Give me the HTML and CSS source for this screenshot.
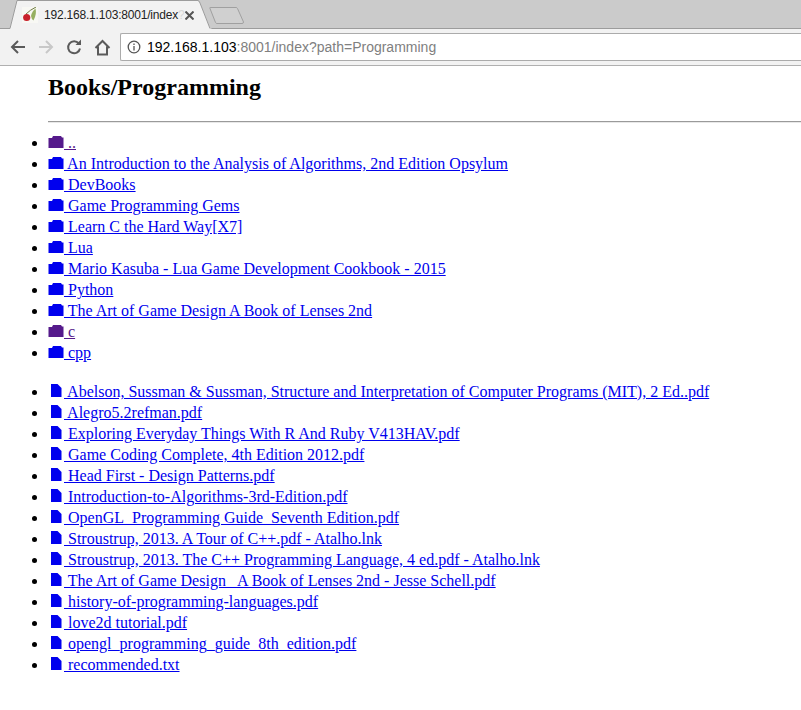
FILE: index.html
```html
<!DOCTYPE html>
<html>
<head>
<meta charset="utf-8">
<title>Books/Programming</title>
<link rel="stylesheet" href="styles.css">
</head>
<body>
<header class="chrome">
  <div class="tabstrip">
    <svg class="tab-shape" width="260" height="29" viewBox="0 0 260 29">
      <path class="tab-bg" d="M8 29 L10 28 L17 1 H198 Q199 1 200 3 L210 28 L212 29 Z"/>
      <path class="tab-line" d="M0 28.500 H10 L17 .5 H198 Q199 .5 200 3 L210 28.500"/>
      <path class="newtab" d="M210 8.500 Q209 7.500 211 7.500 H236 Q237 7.500 237.500 8.500 L243.500 22 Q243.500 23.500 242 23.500 H217 Q216 23.500 215.500 22.500 Z"/>
    </svg>
    <svg class="favicon" width="16" height="16" viewBox="0 0 16 16">
      <rect width="16" height="16" fill="#f8f8f4"/>
      <path d="M9 9 Q10 4 13.500 1.500 Q15 7 11.500 13.500 Q9.500 12.500 9 9Z" fill="#96b060"/>
      <path d="M4 7 Q8 3 14 0" fill="none" stroke="#6f7a40"/>
      <circle cx="4.700" cy="10.500" r="3.600" fill="#c8202a"/>
    </svg>
    <span class="tab-title">192.168.1.103:8001/index<span class="tab-fade">?</span></span>
    <svg class="tab-close" width="9" height="9" viewBox="0 0 9 9"><path d="M.5 .5 L8.500 8.500 M8.500 .5 L.5 8.500"/></svg>
  </div>
  <div class="toolbar">
    <svg class="nav" width="16" height="18" viewBox="0 0 16 18"><path class="nav-dark" d="M15 9 H2 M8 3 L2 9 L8 15"/></svg>
    <svg class="nav" width="16" height="18" viewBox="0 0 16 18"><path class="nav-faint" d="M1 9 H14 M8 3 L14 9 L8 15"/></svg>
    <svg class="nav" width="16" height="18" viewBox="0 0 16 18"><path class="nav-dark" d="M12.800 5.500 A6 6 0 1 0 14 10.500"/><path class="nav-fill" d="M9.500 7 H15 V1.500 Z"/></svg>
    <svg class="nav nav-wide" width="18" height="18" viewBox="0 0 18 18"><path class="nav-dark" d="M1.500 10 L8.500 3 L15.500 10 M4 8.500 V16.500 H13 V8.500"/></svg>
    <div class="omnibox">
      <svg class="info" width="14" height="14" viewBox="0 0 14 14"><circle cx="7" cy="7" r="5.800"/><path d="M7 6 V10.500 M7 3.500 V5"/></svg>
      <span class="host">192.168.1.103</span><span class="rest">:8001/index?path=Programming</span>
    </div>
  </div>
</header>
<main>
  <h1>Books/Programming</h1>
  <hr>
  <ul class="dirs">
    <li><a class="seen" href="#x"><svg class="ico"><use href="#f"/></svg> ..</a></li>
    <li><a href="#a"><svg class="ico"><use href="#f"/></svg> An Introduction to the Analysis of Algorithms, 2nd Edition Opsylum</a></li>
    <li><a href="#a"><svg class="ico"><use href="#f"/></svg> DevBooks</a></li>
    <li><a href="#a"><svg class="ico"><use href="#f"/></svg> Game Programming Gems</a></li>
    <li><a href="#a"><svg class="ico"><use href="#f"/></svg> Learn C the Hard Way[X7]</a></li>
    <li><a href="#a"><svg class="ico"><use href="#f"/></svg> Lua</a></li>
    <li><a href="#a"><svg class="ico"><use href="#f"/></svg> Mario Kasuba - Lua Game Development Cookbook - 2015</a></li>
    <li><a href="#a"><svg class="ico"><use href="#f"/></svg> Python</a></li>
    <li><a href="#a"><svg class="ico"><use href="#f"/></svg> The Art of Game Design A Book of Lenses 2nd</a></li>
    <li><a class="seen" href="#x"><svg class="ico"><use href="#f"/></svg> c</a></li>
    <li><a href="#a"><svg class="ico"><use href="#f"/></svg> cpp</a></li>
  </ul>
  <ul class="files">
    <li><a href="#a"><svg class="ico"><use href="#d"/></svg> Abelson, Sussman &amp; Sussman, Structure and Interpretation of Computer Programs (MIT), 2 Ed..pdf</a></li>
    <li><a href="#a"><svg class="ico"><use href="#d"/></svg> Alegro5.2refman.pdf</a></li>
    <li><a href="#a"><svg class="ico"><use href="#d"/></svg> Exploring Everyday Things With R And Ruby V413HAV.pdf</a></li>
    <li><a href="#a"><svg class="ico"><use href="#d"/></svg> Game Coding Complete, 4th Edition 2012.pdf</a></li>
    <li><a href="#a"><svg class="ico"><use href="#d"/></svg> Head First - Design Patterns.pdf</a></li>
    <li><a href="#a"><svg class="ico"><use href="#d"/></svg> Introduction-to-Algorithms-3rd-Edition.pdf</a></li>
    <li><a href="#a"><svg class="ico"><use href="#d"/></svg> OpenGL_Programming Guide_Seventh Edition.pdf</a></li>
    <li><a href="#a"><svg class="ico"><use href="#d"/></svg> Stroustrup, 2013. A Tour of C++.pdf - Atalho.lnk</a></li>
    <li><a href="#a"><svg class="ico"><use href="#d"/></svg> Stroustrup, 2013. The C++ Programming Language, 4 ed.pdf - Atalho.lnk</a></li>
    <li><a href="#a"><svg class="ico"><use href="#d"/></svg> The Art of Game Design_ A Book of Lenses 2nd - Jesse Schell.pdf</a></li>
    <li><a href="#a"><svg class="ico"><use href="#d"/></svg> history-of-programming-languages.pdf</a></li>
    <li><a href="#a"><svg class="ico"><use href="#d"/></svg> love2d tutorial.pdf</a></li>
    <li><a href="#a"><svg class="ico"><use href="#d"/></svg> opengl_programming_guide_8th_edition.pdf</a></li>
    <li><a href="#a"><svg class="ico"><use href="#d"/></svg> recommended.txt</a></li>
  </ul>
</main>
<svg class="defs" width="0" height="0">
  <symbol id="f" viewBox="0 0 16 13"><path d="M0.500 13 V3 H4 L5 1 H13 L14 2.500 H15.500 V13 Z"/></symbol>
  <symbol id="d" viewBox="0 0 16 13"><path d="M3 0 H9.500 L13.500 4 V13 H3 Z"/></symbol>
</svg>
</body>
</html>
```
FILE: styles.css
```css
html, body { margin: 0; padding: 0; background: #fff; }
body { font-family: "Liberation Serif", "Times New Roman", serif; font-size: 16px; color: #000; overflow: hidden; }

.chrome { height: 66px; font-family: "Liberation Sans", Arial, sans-serif; }
.tabstrip { position: relative; height: 29px; background: #cbcbcb; border-bottom: 1px solid #9c9c9c; display: flex; align-items: center; box-sizing: border-box; padding: 2px 0 0 22px; }
.tab-shape { position: absolute; left: 0; top: 0; }
.tab-bg { fill: #f2f2f2; }
.tab-line { fill: none; stroke: #9c9c9c; }
.newtab { fill: #d0d0d0; stroke: #a0a0a0; }
.favicon { position: relative; flex: none; }
.tab-title { position: relative; flex: none; width: 135px; margin-left: 6px; font-size: 12px; letter-spacing: -0.2px; white-space: nowrap; color: #222; }
.tab-fade { color: #d8d8d8; }
.tab-close { position: relative; flex: none; margin-left: 6px; fill: none; stroke: #555; stroke-width: 2; }
.toolbar { height: 37px; background: #f2f2f2; border-bottom: 1px solid #b0b0b0; box-sizing: border-box; display: flex; align-items: center; padding-left: 10px; gap: 12px; }
.nav { flex: none; }
.nav-wide { margin-right: -4px; }
.nav-dark { fill: none; stroke: #5a5a5a; stroke-width: 2; }
.nav-faint { fill: none; stroke: #c8c8c8; stroke-width: 2; }
.nav-fill { fill: #5a5a5a; }
.omnibox { flex: 1; height: 28px; background: #fff; border: 1px solid #ababab; border-right: 0; border-radius: 2px 0 0 2px; box-sizing: border-box; display: flex; align-items: center; padding-left: 6px; font-size: 14px; white-space: nowrap; }
.info { fill: none; stroke: #555; stroke-width: 1.300; margin-right: 6px; flex: none; }
.host { color: #000; }
.rest { color: #808080; }

main { margin-left: 48px; }
h1 { font-size: 24px; line-height: 27px; margin: 8px 0 20px; font-weight: bold; }
hr { margin: 0; height: 0; border: 0; border-top: 1px solid #9a9a9a; border-bottom: 1px solid #e8e8e8; }
ul { margin: 0; padding: 0; }
.dirs { margin-top: 9px; }
.files { margin-top: 18px; }
li { height: 21px; line-height: 21px; }
a { color: #0000ee; }
a.seen { color: #551a8b; }
.ico { width: 16px; height: 13px; fill: currentColor; vertical-align: baseline; }
.defs { position: absolute; }
```
